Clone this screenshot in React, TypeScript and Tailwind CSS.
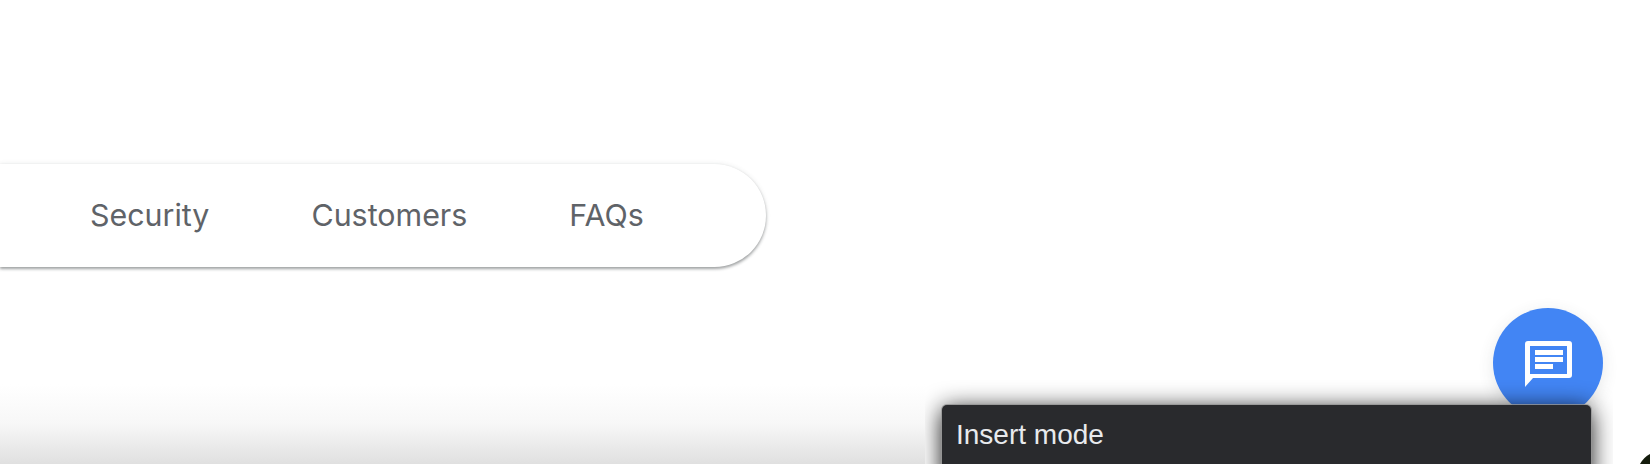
import React from "react";

const navItems = ["Security", "Customers", "FAQs"];

const ChatIcon = () => (
  <svg width="47" height="46" viewBox="0 0 47 46" fill="white">
    <path
      fillRule="evenodd"
      d="M3 0H44a3 3 0 0 1 3 3V34a3 3 0 0 1-3 3H8L0 46V3a3 3 0 0 1 3-3ZM5 5V33H42V5Z"
    />
    <rect x="10" y="9" width="28" height="5" />
    <rect x="10" y="16" width="28" height="5" />
    <rect x="10" y="23" width="18" height="5" />
  </svg>
);

export default function App() {
  return (
    <div className="relative h-[464px] w-[1650px] overflow-hidden bg-white pt-[164px]">
      {/* bottom fade, stops where the toast's box begins */}
      <div className="absolute bottom-0 left-0 h-[80px] w-[925px] bg-gradient-to-b from-white via-[#f7f7f7] via-50% to-[#e0e0e0]" />

      <nav
        className="relative flex h-[103px] w-[766px] items-center gap-[102px] rounded-r-[52px] bg-white pl-[90px] text-[30.4px] text-[#5f6368] shadow-[0_2px_3px_rgba(60,64,67,0.45),0_0_5px_rgba(60,64,67,0.12)]"
        style={{ fontFamily: "Inter, sans-serif" }}
      >
        {navItems.map((item) => (
          <a key={item}>{item}</a>
        ))}
      </nav>

      <button className="absolute left-[1493px] top-[308px] flex h-[110px] w-[110px] justify-center rounded-full bg-[#4285f4] pt-[33px] pl-[1px] shadow-[0_4px_16px_rgba(60,64,67,0.12)]">
        <ChatIcon />
      </button>

      {/* clipped shadow box around the toast */}
      <div className="absolute left-[925px] top-[370px] h-[94px] w-[688px] overflow-hidden">
        <div
          className="absolute left-[17px] top-[35px] h-[80px] w-[649px] rounded-[5px] bg-[#292a2d] pl-[14px] pt-[13px] text-[28px] leading-[34px] text-[#e8eaed] shadow-[0_0_0_1px_rgba(150,150,150,0.8),0_4px_24px_rgba(0,0,0,0.95)]"
          style={{ fontFamily: "'Liberation Sans', Arial, sans-serif" }}
        >
          Insert mode
        </div>
      </div>

      {/* window corner */}
      <svg className="absolute bottom-0 right-0" width="10" height="10" viewBox="0 0 10 10">
        <path d="M10 0C6 2 2 6 0 10H10Z" fill="#141c0c" />
      </svg>
    </div>
  );
}
